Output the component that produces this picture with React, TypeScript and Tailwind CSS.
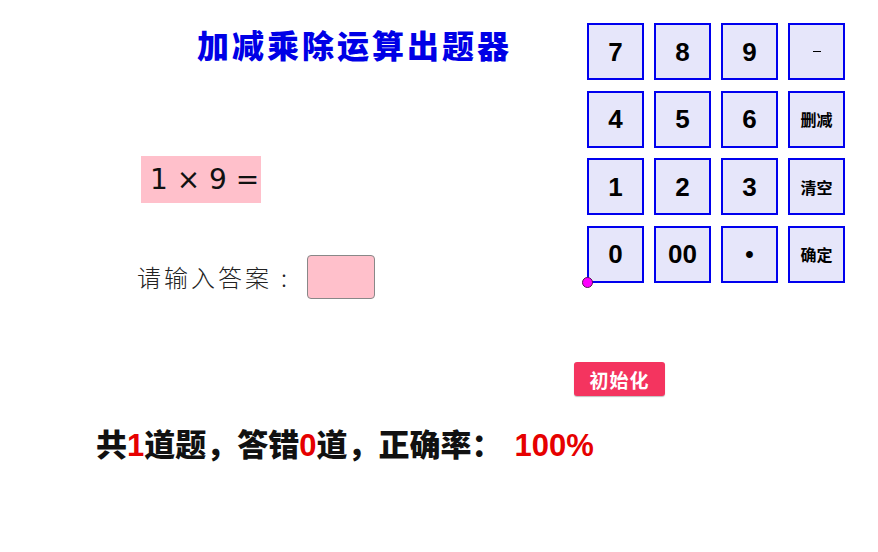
import React from 'react';

const keys = ['7', '8', '9', '-', '4', '5', '6', '删减', '1', '2', '3', '清空', '0', '00', '•', '确定'];

const cjk = { fontFamily: '"Noto Sans CJK SC", sans-serif' };
const sans = { fontFamily: '"Liberation Sans", Arial, sans-serif' };

function Key({ label }: { label: string }) {
  const isWord = label.length === 2 && !/\d/.test(label);
  let content: React.ReactNode = label;
  let cls = 'text-[26px] font-bold';
  if (isWord) cls = 'text-[16px] font-bold';
  if (label === '•') cls = 'text-[24px] font-bold';
  if (label === '-') content = <span className="block w-[8px] h-[1.5px] bg-black" />;
  return (
    <button
      className={`w-[57px] h-[57px] border-[2.5px] border-[#0000ee] bg-[#e6e6fa] flex items-center justify-center text-black leading-none ${cls}`}
      style={isWord ? cjk : sans}
    >
      {content}
    </button>
  );
}

export default function App() {
  return (
    <div className="w-[878px] h-[552px] bg-white overflow-hidden" style={cjk}>
      <div className="flex items-start">
        <div className="w-[587px] flex flex-col">
          <h1 className="ml-[197px] mt-[24px] text-[32px] leading-[40px] font-black tracking-[3px] text-[#0000e6]">
            加减乘除运算出题器
          </h1>
          <div
            className="ml-[141px] mt-[92px] w-[120px] h-[47px] bg-[#ffc0cb] flex items-center pl-[9px] text-[28px] text-[#111]"
            style={{ fontFamily: '"DejaVu Sans", sans-serif' }}
          >
            1 × 9 =
          </div>
          <div className="ml-[137px] mt-[52px] flex items-center">
            <span className="text-[24px] font-light tracking-[3px] text-[#222]">请输入答案</span>
            <span className="text-[24px] font-light text-[#222] w-[24px] text-center">:</span>
            <div className="ml-[11px] w-[68px] h-[44px] bg-[#ffc0cb] border border-[#888] rounded-[4px]" />
          </div>
        </div>
        <div className="relative mt-[23px]">
          <div className="grid grid-cols-4 gap-x-[10px] gap-y-[10.5px]">
            {keys.map((k) => (
              <Key key={k} label={k} />
            ))}
          </div>
          <span className="absolute left-[-5px] bottom-[-5px] w-[11px] h-[11px] rounded-full bg-[#ff00ff] border border-[#551155]" />
        </div>
      </div>

      <div className="mt-[63px] ml-[574px]">
        <button className="w-[91px] h-[34px] bg-[#f4345f] rounded-[3px] text-white text-[19px] font-bold tracking-[1px] leading-none shadow-[0_1px_1px_rgba(0,0,0,0.25)]">
          初始化
        </button>
      </div>

      <div className="mt-[24px] ml-[96px] flex items-baseline text-[31px] font-black text-[#111]">
        <span>共</span>
        <span className="text-[#e60000] font-bold" style={sans}>1</span>
        <span>道题，答错</span>
        <span className="text-[#e60000] font-bold" style={sans}>0</span>
        <span>道，正确率：</span>
        <span className="ml-[12px] text-[#e60000] font-bold" style={sans}>
          100%
        </span>
      </div>
    </div>
  );
}
